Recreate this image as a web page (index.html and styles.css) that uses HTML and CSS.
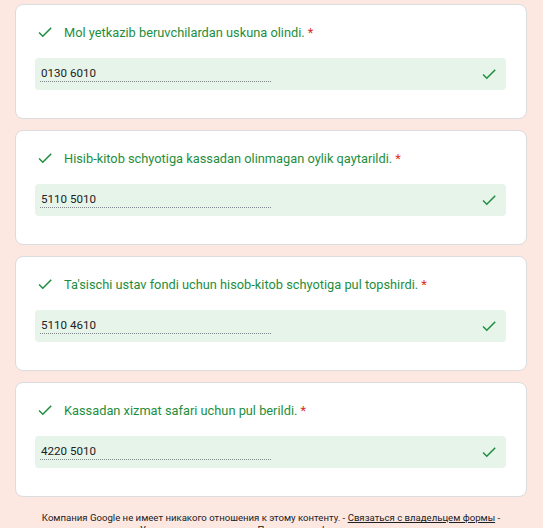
FILE: index.html
```html
<!DOCTYPE html>
<html lang="ru">
<head>
    <meta charset="UTF-8">
    <meta name="viewport" content="width=device-width, initial-scale=1.0">
    <title>Javoblar</title>
    <link rel="stylesheet" href="styles.css">
</head>
<body>
    <div class="container">
        <div class="question">
            <div class="question-title">
                <svg class="check" viewBox="0 0 24 24"><path d="M9 16.17L4.83 12l-1.42 1.41L9 19 21 7l-1.41-1.41z"/></svg>
                <span>Mol yetkazib beruvchilardan uskuna olindi.</span>
                <span class="required">*</span>
            </div>
            <div class="answer">
                <div class="answer-text">0130 6010</div>
                <svg class="check" viewBox="0 0 24 24"><path d="M9 16.17L4.83 12l-1.42 1.41L9 19 21 7l-1.41-1.41z"/></svg>
            </div>
        </div>

        <div class="question">
            <div class="question-title">
                <svg class="check" viewBox="0 0 24 24"><path d="M9 16.17L4.83 12l-1.42 1.41L9 19 21 7l-1.41-1.41z"/></svg>
                <span>Hisib-kitob schyotiga kassadan olinmagan oylik qaytarildi.</span>
                <span class="required">*</span>
            </div>
            <div class="answer">
                <div class="answer-text">5110 5010</div>
                <svg class="check" viewBox="0 0 24 24"><path d="M9 16.17L4.83 12l-1.42 1.41L9 19 21 7l-1.41-1.41z"/></svg>
            </div>
        </div>

        <div class="question">
            <div class="question-title">
                <svg class="check" viewBox="0 0 24 24"><path d="M9 16.17L4.83 12l-1.42 1.41L9 19 21 7l-1.41-1.41z"/></svg>
                <span>Ta'sischi ustav fondi uchun hisob-kitob schyotiga pul topshirdi.</span>
                <span class="required">*</span>
            </div>
            <div class="answer">
                <div class="answer-text">5110 4610</div>
                <svg class="check" viewBox="0 0 24 24"><path d="M9 16.17L4.83 12l-1.42 1.41L9 19 21 7l-1.41-1.41z"/></svg>
            </div>
        </div>

        <div class="question">
            <div class="question-title">
                <svg class="check" viewBox="0 0 24 24"><path d="M9 16.17L4.83 12l-1.42 1.41L9 19 21 7l-1.41-1.41z"/></svg>
                <span>Kassadan xizmat safari uchun pul berildi.</span>
                <span class="required">*</span>
            </div>
            <div class="answer">
                <div class="answer-text">4220 5010</div>
                <svg class="check" viewBox="0 0 24 24"><path d="M9 16.17L4.83 12l-1.42 1.41L9 19 21 7l-1.41-1.41z"/></svg>
            </div>
        </div>

        <div class="footer">
            Компания Google не имеет никакого отношения к этому контенту. - <a href="#">Связаться с владельцем формы</a> -
            <a href="#">Условия использования</a> - <a href="#">Политика конфиденциальности</a>
        </div>
    </div>
</body>
</html>
```

FILE: styles.css
```css
/* Reset */
* {
  box-sizing: border-box;
  margin: 0;
  padding: 0;
}

body {
  font-family: Roboto, Arial, sans-serif;
  background-color: #fce8e1;
  color: #202124;
}

/* Page column */
.container {
  display: flex;
  flex-direction: column;
  gap: 11px;
  padding: 4px 16px 0 15px;
}

/* Question card */
.question {
  background-color: #fff;
  border: 1px solid #dadce0;
  border-radius: 8px;
  padding: 17px 20px 28px 19px;
  height: 115px;
}

.question-title {
  display: flex;
  align-items: center;
  height: 20px;
  font-size: 12.8px;
  color: #1e8e3e;
  margin-bottom: 16px;
}

.question-title .check {
  margin: 0 10px 0 1px;
}

.required {
  color: #d93025;
  margin-left: 3px;
}

.check {
  width: 18px;
  height: 18px;
  fill: #1e8e3e;
  flex-shrink: 0;
}

/* Answer box */
.answer {
  display: flex;
  align-items: center;
  justify-content: space-between;
  height: 32px;
  background-color: #e6f4ea;
  border-radius: 4px;
  padding: 0 8px 0 5px;
}

.answer-text {
  width: 231px;
  font-size: 11.6px;
  line-height: 15px;
  padding: 0 0 0 1px;
  margin-bottom: 1px;
  border-bottom: 1px dotted #80868b;
}

/* Footer */
.footer {
  text-align: center;
  font-size: 9.6px;
  line-height: 12px;
  padding: 4px 20px 0;
  color: #202124;
}

.footer a {
  color: #202124;
}
```
